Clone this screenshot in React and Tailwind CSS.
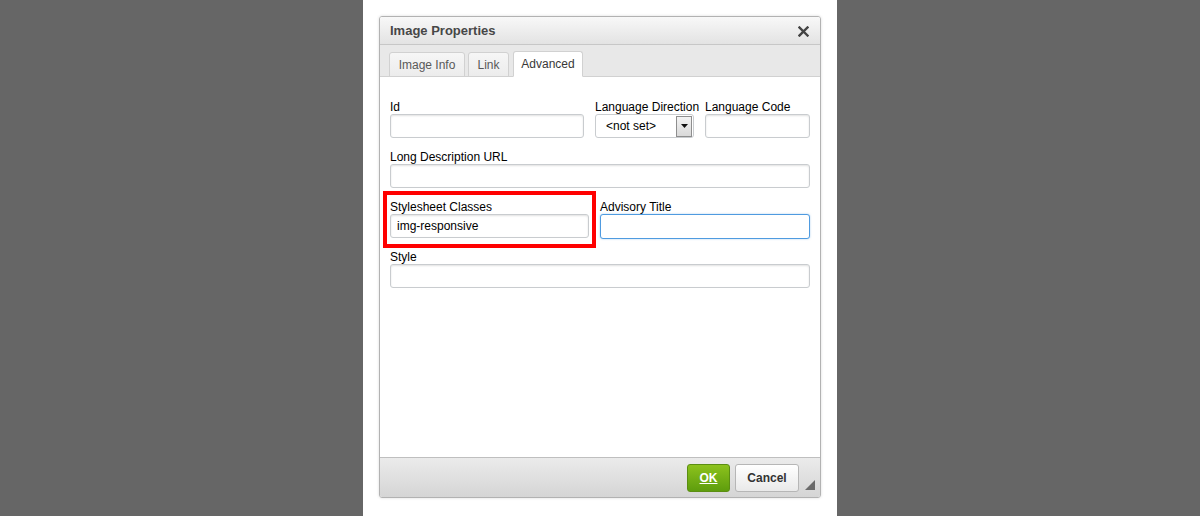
import React from "react";

const inputCls =
  "h-[24px] w-full rounded-[3px] border border-[#c9cccf] bg-white shadow-[inset_0_1px_2px_rgba(0,0,0,0.12)] px-[6px] text-[12px] text-[#000] outline-none";

function Label({ children }) {
  return <div className="h-[14px] leading-[14px] text-[12px] text-[#000] whitespace-nowrap">{children}</div>;
}

export default function App() {
  return (
    <div
      className="w-[1200px] h-[516px] bg-[#666666] flex justify-center overflow-hidden"
      style={{ fontFamily: '"Liberation Sans", Arial, sans-serif' }}
    >
      <div className="w-[474px] h-full bg-white pt-[16px] px-[16px]">
        <div className="w-[442px] h-[482px] flex flex-col border border-[#b2b2b2] rounded-[3px] shadow-[0_0_3px_rgba(0,0,0,0.15)] overflow-hidden">
          {/* Title */}
          <div className="h-[28px] shrink-0 flex items-center justify-between pl-[10px] pr-[10px] pt-[1px] bg-gradient-to-b from-[#f8f8f8] to-[#e3e3e3] border-b border-[#c7c7c7]">
            <span className="text-[13px] font-bold text-[#474747]">Image Properties</span>
            <svg width="11" height="11" viewBox="0 0 11 11" className="mr-[1px]">
              <path d="M1.5 1.5 L9.5 9.5 M9.5 1.5 L1.5 9.5" stroke="#444" strokeWidth="2.4" strokeLinecap="square" />
            </svg>
          </div>
          {/* Tabs */}
          <div className="h-[32px] shrink-0 bg-[#e8e8e8] border-b border-[#d1d1d1] flex items-end pl-[9px] gap-[3px]">
            <div className="h-[25px] w-[76px] mb-[-1px] flex items-center justify-center rounded-t-[3px] border border-[#d1d1d1] bg-gradient-to-b from-[#f6f6f6] to-[#ececec] text-[12px] text-[#595959]">
              Image Info
            </div>
            <div className="h-[25px] w-[41px] mb-[-1px] flex items-center justify-center rounded-t-[3px] border border-[#d1d1d1] bg-gradient-to-b from-[#f6f6f6] to-[#ececec] text-[12px] text-[#595959]">
              Link
            </div>
            <div className="h-[26px] w-[70px] mb-[-1px] flex items-center justify-center rounded-t-[3px] border border-[#d1d1d1] border-b-white bg-white text-[12px] text-[#383838] ml-[1px]">
              Advanced
            </div>
          </div>
          {/* Content */}
          <div className="flex-1 bg-white px-[10px] pt-[23px] flex flex-col gap-[12px]">
            {/* Row 1 */}
            <div className="flex gap-[11px]">
              <div className="w-[194px] flex flex-col">
                <Label>Id</Label>
                <input className={inputCls} />
              </div>
              <div className="w-[99px] flex flex-col">
                <Label>Language Direction</Label>
                <div className="h-[24px] w-full rounded-[3px] border border-[#c9cccf] bg-white flex items-center justify-between pl-[10px] pr-[1px]">
                  <span className="text-[12px] text-[#000]">&lt;not set&gt;</span>
                  <div className="w-[16px] h-[21px] border border-[#8e8e8e] bg-gradient-to-b from-[#f4f4f4] to-[#d9d9d9] flex items-center justify-center">
                    <svg width="7" height="4" viewBox="0 0 7 4">
                      <path d="M0 0 L7 0 L3.5 4 Z" fill="#111" />
                    </svg>
                  </div>
                </div>
              </div>
              <div className="flex-1 flex flex-col">
                <Label>Language Code</Label>
                <input className={inputCls} />
              </div>
            </div>
            {/* Row 2 */}
            <div className="flex flex-col">
              <Label>Long Description URL</Label>
              <input className={inputCls} />
            </div>
            {/* Row 3 */}
            <div className="flex gap-[11px]">
              <div className="relative w-[199px] flex flex-col">
                <Label>Stylesheet Classes</Label>
                <input className={inputCls} defaultValue="img-responsive" />
                <div className="absolute left-[-7px] top-[-9px] w-[213px] h-[57px] border-[4px] border-[#ff0000] pointer-events-none" />
              </div>
              <div className="flex-1 flex flex-col">
                <Label>Advisory Title</Label>
                <input className="h-[25px] w-full rounded-[3px] border border-[#4f9be0] bg-white shadow-[0_0_2px_rgba(79,155,224,0.5)] px-[6px] text-[12px] outline-none" />
              </div>
            </div>
            {/* Row 4 */}
            <div className="flex flex-col -mt-[1px]">
              <Label>Style</Label>
              <input className={inputCls} />
            </div>
          </div>
          {/* Footer */}
          <div className="h-[40px] shrink-0 border-t border-[#bfbfbf] bg-gradient-to-b from-[#ebebeb] to-[#d5d5d5] flex items-center justify-end pr-[5px] relative">
            <div className="h-[28px] w-[43px] rounded-[3px] border border-[#5b8e12] bg-gradient-to-b from-[#8cc21d] to-[#5e9d0d] flex items-center justify-center text-[12px] font-bold text-white underline">
              OK
            </div>
            <div className="h-[28px] w-[64px] ml-[5px] rounded-[3px] border border-[#b6b6b6] bg-gradient-to-b from-[#ffffff] to-[#e9e9e9] flex items-center justify-center text-[12px] font-bold text-[#333]">
              Cancel
            </div>
            <div className="w-[10px] h-[11px] ml-[6px] self-end mb-[6px]">
              <svg width="10" height="10" viewBox="0 0 10 10">
                <path d="M10 0 L10 10 L0 10 Z" fill="#6b6b6b" />
              </svg>
            </div>
          </div>
        </div>
      </div>
    </div>
  );
}
